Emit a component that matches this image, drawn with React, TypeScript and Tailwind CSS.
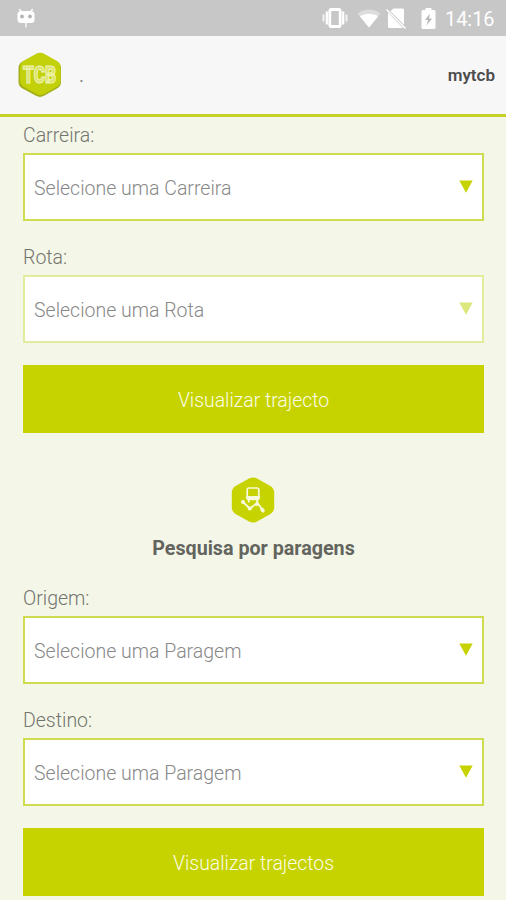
import clsx from 'clsx'

function StatusBar() {
  return (
    <div className="flex h-9 items-center justify-between bg-[#c7c7c7] pl-[17px] pr-[11px] text-white">
      <svg width="18" height="22" viewBox="0 0 18 22" className="mt-0.5">
        <path d="M2.200 1l2.300 2.600M15.800 1l-2.300 2.600M9 13v6.500" stroke="currentColor" strokeWidth="1.300" />
        <rect x="0.500" y="3" width="17" height="12" rx="3.500" fill="currentColor" />
        <circle cx="5" cy="8.500" r="1.900" fill="#b5b5b5" />
        <circle cx="13" cy="8.500" r="1.900" fill="#b5b5b5" />
      </svg>

      <div className="flex items-center">
        <svg width="26" height="20" viewBox="0 0 26 20">
          <rect x="7.800" y="1.500" width="10.400" height="17" rx="1.500" fill="none" stroke="currentColor" strokeWidth="2.800" />
          <path d="M4.800 3.500v13M21.200 3.500v13" stroke="currentColor" strokeWidth="2.200" />
          <path d="M1.500 6.500v7M24.500 6.500v7" stroke="currentColor" strokeWidth="2" opacity="0.800" />
        </svg>
        <svg width="24" height="19" viewBox="0 0 24 19" className="ml-[9px]">
          <path d="M12 18.500L0.500 4.500C7 -0.800 17 -0.800 23.500 4.500z" fill="currentColor" opacity="0.400" />
          <path d="M12 18.500L2.800 7.300C8 3.800 16 3.800 21.200 7.300z" fill="currentColor" />
        </svg>
        <svg width="21" height="21" viewBox="0 0 21 21" className="ml-[5px]">
          <path d="M7.500 0.500h9a1.500 1.500 0 0 1 1.500 1.500v14.800L4.500 3.300zM2 4.800L17 20H3.500A1.500 1.500 0 0 1 2 18.500z" fill="currentColor" />
          <path d="M0.500 1.500L19.500 20.500" stroke="currentColor" strokeWidth="1.400" />
        </svg>
        <svg width="15" height="21" viewBox="0 0 15 21" className="ml-[14px]">
          <path d="M4.500 0h6v2H13a1.500 1.500 0 0 1 1.500 1.500v16A1.500 1.500 0 0 1 13 21H2a1.500 1.500 0 0 1-1.500-1.500v-16A1.500 1.500 0 0 1 2 2h2.500z" fill="currentColor" />
          <path d="M9 5.500L4 12h3l-1.500 5.500L11 10.500H8z" fill="#b8b8b8" />
        </svg>
        <span className="ml-[9px] mt-[3px] w-[50px] whitespace-nowrap text-[19.900px] leading-6 font-normal">14:16</span>
      </div>
    </div>
  )
}

function Logo() {
  return (
    <svg width="44" height="46" viewBox="0 0 44 46" className="overflow-visible">
      <path d="M18 2.200q4-2.200 8 0l13 7.300q4 2.200 4 6.500v14q0 4.300-4 6.500l-13 7.300q-4 2.200-8 0L4.500 36.500q-4-2.200-4-6.500V16q0-4.300 4-6.500z" fill="#a4b018" />
      <path d="M18.500 1.700q3.700-2 7.500 0l12.500 7q4 2.200 4 6.200v13.800q0 4-4 6.200l-12.500 7q-3.800 2-7.500 0l-12.500-7q-3.800-2.200-3.800-6.200V14.900q0-4 3.800-6.200z" fill="#c3d10a" />
      <g transform="translate(5 31) scale(0.720 1)">
        <text
          className="font-['Roboto',sans-serif] text-[24px] font-black"
          fill="#dbe36a"
          stroke="#eff3b4"
          strokeWidth="1.200"
        >
          TCB
        </text>
      </g>
    </svg>
  )
}

function StopsIcon() {
  return (
    <svg width="44" height="46" viewBox="0 0 44 46" className="mr-px">
      <path d="M18 1.600q4-2.200 8 0l13 7.200q4.200 2.400 4.200 6.700v15q0 4.300-4.200 6.700l-13 7.200q-4 2.200-8 0L5 37.200Q.8 34.800.8 30.500v-15Q.8 11.200 5 8.800z" fill="#c7d300" />
      <g fill="none" stroke="#f7f9dc" strokeLinecap="round" strokeLinejoin="round">
        <rect x="16.200" y="11" width="11.600" height="11.500" rx="1.800" strokeWidth="1.700" />
        <path d="M16.500 20.500h11" strokeWidth="3.200" />
        <path d="M17.800 23.500v1M26.200 23.500v1" strokeWidth="2" />
        <path d="M12 25l6.800 6.500L26.500 26l5.500 7.500" strokeWidth="1.800" />
      </g>
      <g fill="#f7f9dc">
        <circle cx="12" cy="25" r="2" />
        <circle cx="18.800" cy="31.500" r="2.100" />
        <circle cx="26" cy="27" r="2" />
        <ellipse cx="31.500" cy="33" rx="1.900" ry="2.700" transform="rotate(-32 31.500 33)" />
      </g>
    </svg>
  )
}

type SelectFieldProps = {
  label: string
  placeholder: string
  disabled?: boolean
}

function SelectField({ label, placeholder, disabled }: SelectFieldProps) {
  return (
    <div>
      <div className="h-[35px] text-[19.500px] leading-[36px] text-[#73746e]">{label}</div>
      <button
        type="button"
        disabled={disabled}
        className={clsx(
          'flex h-[68px] w-full items-center justify-between border-2 bg-white pl-[9px] pr-[9px] text-[19.500px] text-[#888]',
          disabled ? 'border-[#e3ec9c]' : 'border-[#cfdc50]',
        )}
      >
        <span className="pt-[3px]">{placeholder}</span>
        <svg width="14" height="13" viewBox="0 0 14 13" className="mb-px">
          <path d="M0.300 0.500h13.400L7 12.800z" fill={disabled ? '#dce77c' : '#c7d300'} />
        </svg>
      </button>
    </div>
  )
}

function SubmitButton({ children }: { children: string }) {
  return (
    <button type="button" className="mt-[22px] h-[68px] w-full bg-[#c7d300] pt-[3px] text-[19.400px] text-[#fbfce8]">
      {children}
    </button>
  )
}

export default function App() {
  return (
    <div className="h-[900px] overflow-hidden bg-[#f4f7e8] font-['Roboto',sans-serif] font-light">
      <StatusBar />
      <header className="flex h-[81px] items-center border-b-[3px] border-[#c5d126] bg-[#f7f7f7] pl-[18px] pr-[11px]">
        <Logo />
        <span className="ml-[17px] mt-0.5 text-[19px] font-normal text-[#888]">.</span>
        <span className="ml-auto mt-0.5 text-[17px] font-semibold text-[#4d4d4d]">mytcb</span>
      </header>

      <main className="pl-[23px] pr-[22px] pt-px">
        <div className="flex flex-col gap-[19px]">
          <SelectField label="Carreira:" placeholder="Selecione uma Carreira" />
          <SelectField label="Rota:" placeholder="Selecione uma Rota" disabled />
        </div>
        <SubmitButton>Visualizar trajecto</SubmitButton>

        <div className="mt-11 flex h-[104px] flex-col items-center">
          <StopsIcon />
          <h2 className="mt-[14px] text-[19.700px] leading-6 font-bold text-[#62645d]">Pesquisa por paragens</h2>
        </div>

        <div className="flex flex-col gap-[19px]">
          <SelectField label="Origem:" placeholder="Selecione uma Paragem" />
          <SelectField label="Destino:" placeholder="Selecione uma Paragem" />
        </div>
        <SubmitButton>Visualizar trajectos</SubmitButton>
      </main>
    </div>
  )
}
